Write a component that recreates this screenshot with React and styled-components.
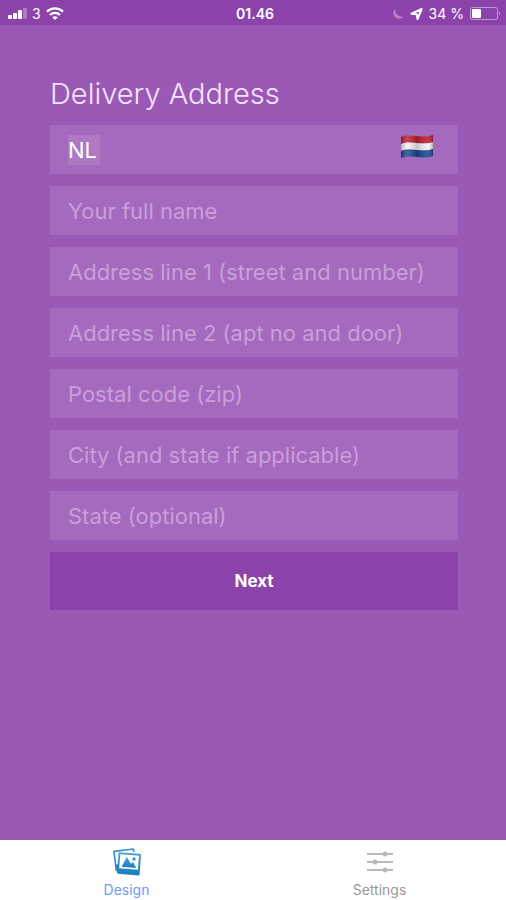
import React from "react";
import styled, { createGlobalStyle } from "styled-components";

const fields = [
  { name: "fullName", label: "Your full name" },
  { name: "address1", label: "Address line 1 (street and number)" },
  { name: "address2", label: "Address line 2 (apt no and door)" },
  { name: "postalCode", label: "Postal code (zip)" },
  { name: "city", label: "City (and state if applicable)" },
  { name: "state", label: "State (optional)" },
];

export default function App() {
  return (
    <>
      <GlobalStyle />
      <Screen>
        <StatusBar />
        <Content>
          <AddressForm onSubmit={(e) => e.preventDefault()}>
            <Title>Delivery Address</Title>
            <CountryField>
              <CountryInput name="country" aria-label="Country" defaultValue="NL" />
              <Flag />
            </CountryField>
            {fields.map((field) => (
              <Field
                key={field.name}
                name={field.name}
                placeholder={field.label}
                aria-label={field.label}
              />
            ))}
            <NextButton type="submit">Next</NextButton>
          </AddressForm>
        </Content>
        <TabBar>
          <Tab href="#design" $active aria-current="page">
            <DesignIcon />
            Design
          </Tab>
          <Tab href="#settings">
            <SettingsIcon />
            Settings
          </Tab>
        </TabBar>
      </Screen>
    </>
  );
}

function StatusBar() {
  return (
    <StatusRow>
      <StatusGroup>
        <svg width="20" height="12" viewBox="0 0 20 12" fill="#fff" aria-hidden="true">
          <rect x="0" y="7" width="4" height="4" rx="1" />
          <rect x="5" y="5" width="4" height="6" rx="1" />
          <rect x="10" y="2" width="4" height="9" rx="1" />
          <rect x="15" y="0" width="4" height="11" rx="1" opacity="0.3" />
        </svg>
        <span>3</span>
        <svg width="19" height="13" viewBox="-1 0 19 13" fill="none" stroke="#fff" strokeWidth="2.2" aria-hidden="true">
          <path d="M1 4.7C5.400 .3 12.600 .3 17 4.700" />
          <path d="M4 8C6.800 5.200 11.200 5.200 14 8" />
          <path d="M6.300 10.200C7.800 8.800 10.200 8.800 11.700 10.200L9 13Z" fill="#fff" stroke="none" />
        </svg>
      </StatusGroup>
      <Clock>01.46</Clock>
      <StatusGroup $end>
        <svg width="12" height="12" viewBox="0 0 12 12" fill="#fff" opacity="0.35" aria-hidden="true">
          <path d="M3.500 .5A5.700 5.700 0 1 0 11.500 8.500A6.500 6.500 0 0 1 3.500 .5Z" />
        </svg>
        <svg width="13" height="12" viewBox="0 0 13 12" aria-hidden="true">
          <path d="M1.500 5.700L11.700 1L7.500 11L6.800 6.200Z" fill="none" stroke="#fff" strokeWidth="2" strokeLinejoin="round" />
        </svg>
        <span>34 %</span>
        <svg width="32" height="13" viewBox="0 0 32 13" aria-hidden="true">
          <rect x=".5" y=".5" width="27" height="12" rx="2" fill="none" stroke="#fff" strokeOpacity=".45" />
          <rect x="2" y="2" width="9" height="9" rx="1" fill="#fff" />
          <path d="M29 4.500Q31.500 6.500 29 8.500Z" fill="#fff" opacity=".45" />
        </svg>
      </StatusGroup>
    </StatusRow>
  );
}

function Flag() {
  return (
    <svg width="34" height="32" viewBox="0 0 34 32" role="img" aria-label="Netherlands">
      <defs>
        <linearGradient id="shade">
          <stop offset="0" stopColor="#000" stopOpacity=".3" />
          <stop offset=".2" stopColor="#fff" stopOpacity=".15" />
          <stop offset=".5" stopColor="#000" stopOpacity=".2" />
          <stop offset=".85" stopColor="#fff" stopOpacity=".1" />
          <stop offset="1" stopColor="#000" stopOpacity=".3" />
        </linearGradient>
      </defs>
      <path d="M1 3C11 -1 20 5 33 1V8C21 12 12 6 1 10Z" fill="#c1202f" />
      <path d="M1 10C12 6 21 12 33 8V15C21 19 12 13 1 17Z" fill="#f6f3f6" />
      <path d="M1 17C12 13 21 19 33 15V22C21 26 12 20 1 24Z" fill="#1c4b93" />
      <path d="M1 3C11 -1 20 5 33 1V22C21 26 12 20 1 24Z" fill="url(#shade)" />
    </svg>
  );
}

function DesignIcon() {
  return (
    <svg width="30" height="28" viewBox="0 0 30 28" fill="none" aria-hidden="true">
      <defs>
        <linearGradient id="photo" x1="0" y1="0" x2="0" y2="1">
          <stop offset="0" stopColor="#58a6d6" />
          <stop offset="1" stopColor="#167bc0" />
        </linearGradient>
      </defs>
      <path d="M22 4L21.300 1L2 3.300L4.300 22.500L6 22" stroke="#3b91cc" strokeWidth="1.700" strokeLinejoin="round" />
      <path d="M3 17L6 16V23H4.300Z" fill="#2d88c8" />
      <path d="M7.500 4.200L28 5.800Q29 6 29 7L27.600 26.500Q27.500 27.500 26.500 27.500L6 25.800Q5 25.600 5 24.500L6.500 5Q6.600 4.200 7.500 4.200Z" fill="url(#photo)" />
      <path d="M8.300 6.200L27 7.700L25.900 21.800L7.200 20.300Z" fill="#fff" />
      <path d="M9.500 18.800L14.800 9L19 15.800L21 14L24.200 20Z" fill="url(#photo)" />
      <circle cx="22" cy="11" r="1.700" fill="#398fc9" />
    </svg>
  );
}

function SettingsIcon() {
  return (
    <svg width="26" height="28" viewBox="0 0 26 28" stroke="#bababa" strokeWidth="2" fill="#bababa" aria-hidden="true">
      <path d="M0 6H26M0 14H26M0 22H26" />
      <circle cx="18" cy="6" r="1.500" />
      <circle cx="8" cy="14" r="1.500" />
      <circle cx="18" cy="22" r="1.500" />
    </svg>
  );
}

const GlobalStyle = createGlobalStyle`
  * {
    box-sizing: border-box;
  }
  body {
    margin: 0;
    background: #9b59b6;
    font-family: Inter, "Liberation Sans", sans-serif;
  }
  input,
  button {
    font-family: inherit;
  }
`;

const Screen = styled.div`
  display: flex;
  flex-direction: column;
  min-height: 100vh;
  background: #9b59b6;
`;

const StatusRow = styled.header`
  display: grid;
  grid-template-columns: 1fr auto 1fr;
  align-items: center;
  height: 25px;
  padding: 2px 4px 0 8px;
  background: #8c42ab;
  color: #fff;
  font-size: 14px;
  line-height: 16px;
`;

const StatusGroup = styled.div`
  display: flex;
  align-items: center;
  gap: ${(props) => (props.$end ? "6px" : "4px")};
  justify-content: ${(props) => (props.$end ? "flex-end" : "flex-start")};
`;

const Clock = styled.time`
  font-weight: 600;
`;

const Content = styled.main`
  flex: 1;
  padding: 50px 48px 48px 50px;
`;

const AddressForm = styled.form`
  display: flex;
  flex-direction: column;
  gap: 12px;
`;

const Title = styled.h1`
  margin: 0;
  color: #f5e3fb;
  font-size: 29px;
  font-weight: 300;
  line-height: 38px;
`;

const CountryField = styled.div`
  display: flex;
  align-items: center;
  justify-content: space-between;
  height: 49px;
  padding: 0 24px 0 18px;
  background: rgba(255, 255, 255, 0.1);
`;

const CountryInput = styled.input`
  width: 32px;
  height: 30px;
  padding: 0;
  border: 0;
  outline: 0;
  background: rgba(255, 255, 255, 0.1);
  color: #fff;
  font-size: 22px;
`;

const Field = styled.input`
  width: 100%;
  height: 49px;
  padding: 0 18px;
  border: 0;
  border-radius: 0;
  outline: 0;
  background: rgba(255, 255, 255, 0.1);
  color: #fff;
  font-size: 22px;
  &::placeholder {
    color: #cb9edb;
    opacity: 1;
  }
`;

const NextButton = styled.button`
  height: 58px;
  border: 0;
  background: #8c42ab;
  color: #fff;
  font-size: 17px;
  font-weight: 700;
  cursor: pointer;
`;

const TabBar = styled.nav`
  display: grid;
  grid-template-columns: 1fr 1fr;
  height: 60px;
  background: #fff;
`;

const Tab = styled.a`
  display: flex;
  flex-direction: column;
  align-items: center;
  gap: 4px;
  padding-top: 8px;
  color: ${(props) => (props.$active ? "#6f9df0" : "#999")};
  font-size: 14px;
  line-height: 20px;
  text-decoration: none;
`;
